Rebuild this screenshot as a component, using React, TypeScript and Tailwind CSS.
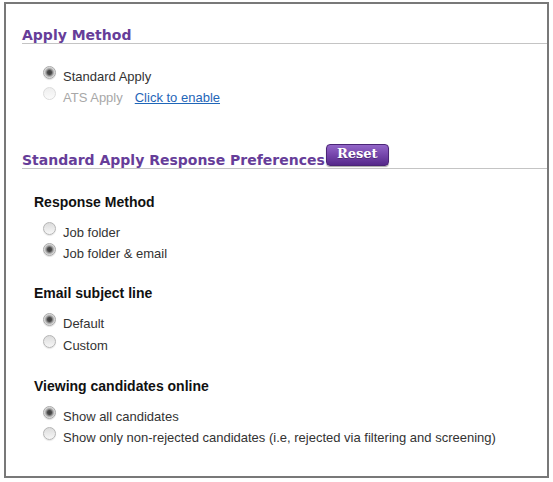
import React from "react";

const heading = "font-['DejaVu_Sans',Verdana,sans-serif] font-bold text-[14px] leading-[16px] text-[#663d99]";
const body = "font-['Liberation_Sans',Arial,sans-serif]";

function Radio({ checked, disabled }: { checked?: boolean; disabled?: boolean }) {
  if (disabled) {
    return (
      <span className="block w-[13px] h-[13px] shrink-0 rounded-full border border-[#dcdcdc] bg-gradient-to-b from-[#eeeeee] to-[#fbfbfb]" />
    );
  }
  if (checked) {
    return (
      <span className="block w-[13px] h-[13px] shrink-0 rounded-full border border-[#a9a9a9] shadow-[0_1px_1px_rgba(0,0,0,0.12)] bg-[radial-gradient(circle,#3f3f3f_0px,#4a4a4a_2px,#9a9a9a_3.5px,#d6d6d6_5px,#ececec_6px)]" />
    );
  }
  return (
    <span className="block w-[13px] h-[13px] shrink-0 rounded-full border border-[#b5b5b5] shadow-[0_1px_1px_rgba(0,0,0,0.1)] bg-gradient-to-b from-[#dcdcdc] to-[#f7f7f7]" />
  );
}

function Option({
  label,
  checked,
  h = "h-[21px] leading-[21px]",
}: {
  label: string;
  checked?: boolean;
  h?: string;
}) {
  return (
    <div className={`flex items-start ml-[37px] ${h}`}>
      <Radio checked={checked} />
      <span className={`${body} text-[13px] text-[#333] ml-[7px]`}>{label}</span>
    </div>
  );
}

function SubHead({ children, mt }: { children: React.ReactNode; mt: string }) {
  return (
    <div className={`${body} ${mt} ml-[28px] font-bold text-[14px] leading-[20px] text-[#111]`}>{children}</div>
  );
}

export default function App() {
  return (
    <div className="w-[553px] h-[482px] bg-white pt-[2px] pl-[4px]">
      <div className="w-[545px] h-[476px] border-2 border-[#787878] bg-white">
        <div className={`ml-[16px] mt-[23px] border-b border-[#c4c4c4] ${heading}`}>Apply Method</div>

        <div className="mt-[22px]">
          <Option label="Standard Apply" checked />
          <div className="flex items-start ml-[37px] h-[21px] leading-[21px]">
            <Radio disabled />
            <span className={`${body} text-[13px] text-[#a8a8a8] ml-[7px]`}>ATS Apply</span>
            <a href="#" className={`${body} text-[13px] text-[#1f66b8] underline ml-[12px]`}>
              Click to enable
            </a>
          </div>
        </div>

        <div className="mt-[36px] ml-[16px] flex items-end border-b border-[#c4c4c4]">
          <span className={heading}>Standard Apply Response Preferences</span>
          <button className="mb-[2px] ml-[1px] w-[63px] h-[22px] rounded-[4px] border border-[#4b2577] bg-gradient-to-b from-[#9366c8] via-[#7545ab] to-[#55288a] shadow-[0_1px_1px_rgba(0,0,0,0.35)] font-['DejaVu_Serif',Georgia,serif] font-bold text-[13px] leading-[18px] text-white [text-shadow:0_1px_0_rgba(0,0,0,0.3)] pb-[2px]">
            Reset
          </button>
        </div>

        <SubHead mt="mt-[23px]">Response Method</SubHead>
        <div className="mt-[10px]">
          <Option label="Job folder" />
          <Option label="Job folder & email" checked />
        </div>

        <SubHead mt="mt-[19px]">Email subject line</SubHead>
        <div className="mt-[10px]">
          <Option label="Default" checked h="h-[22px] leading-[22px]" />
          <Option label="Custom" h="h-[22px] leading-[22px]" />
        </div>

        <SubHead mt="mt-[19px]">Viewing candidates online</SubHead>
        <div className="mt-[10px]">
          <Option label="Show all candidates" checked />
          <Option label="Show only non-rejected candidates (i.e, rejected via filtering and screening)" />
        </div>
      </div>
    </div>
  );
}
